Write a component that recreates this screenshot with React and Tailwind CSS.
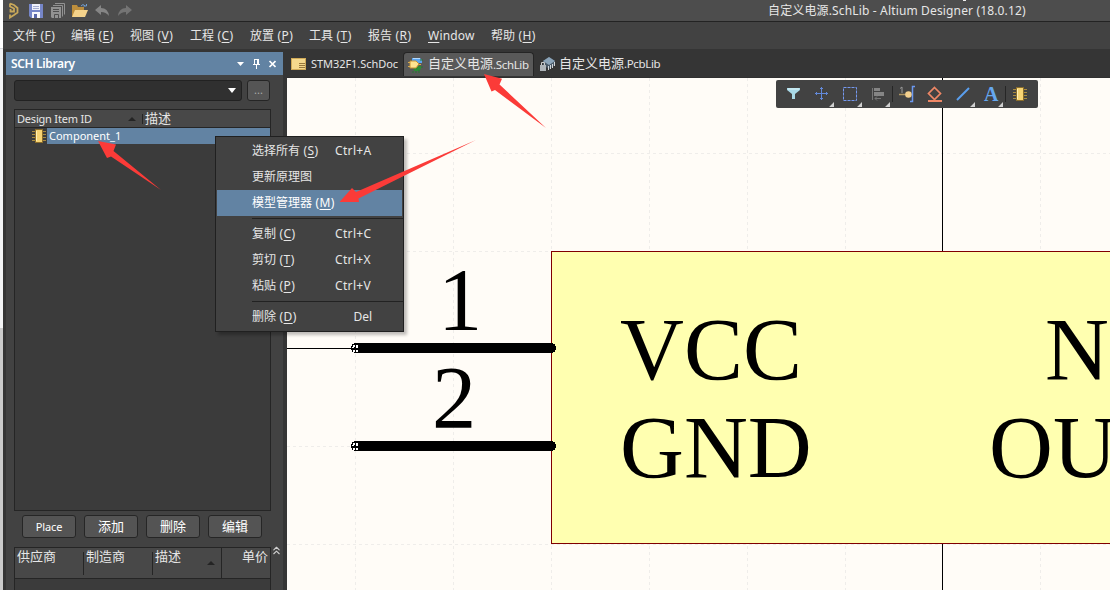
import { ChevronsUp } from 'lucide-react'

const menus = [
  { label: '文件', hot: 'F', w: 'w-[58px]' },
  { label: '编辑', hot: 'E', w: 'w-[59px]' },
  { label: '视图', hot: 'V', w: 'w-[60px]' },
  { label: '工程', hot: 'C', w: 'w-[60px]' },
  { label: '放置', hot: 'P', w: 'w-[59px]' },
  { label: '工具', hot: 'T', w: 'w-[59px]' },
  { label: '报告', hot: 'R', w: 'w-[60px]' },
  { label: 'Window', w: 'w-[63px]' },
  { label: '帮助', hot: 'H', w: 'w-[60px]' },
]

const contextMenu = [
  { label: '选择所有', hot: 'S', keys: 'Ctrl+A' },
  { label: '更新原理图' },
  { label: '模型管理器', hot: 'M', active: true },
  null,
  { label: '复制', hot: 'C', keys: 'Ctrl+C' },
  { label: '剪切', hot: 'T', keys: 'Ctrl+X' },
  { label: '粘贴', hot: 'P', keys: 'Ctrl+V' },
  null,
  { label: '删除', hot: 'D', keys: 'Del' },
]

function Hot({ label, hot }) {
  return (
    <span>
      {label}
      {hot && <span className="tracking-[0.4px]"> (<span className="underline underline-offset-2">{hot}</span>)</span>}
    </span>
  )
}

function Chip({ className }) {
  return (
    <svg className={className} width="16" height="16" viewBox="0 0 16 16">
      <path d="M1 3.500h14M1 6.500h14M1 9.500h14M1 12.500h14" stroke="#a88a3e" />
      <rect x="4.500" y="1.500" width="7" height="13" fill="#f7d473" stroke="#8a6d2c" />
      <path d="M5.500 3v10" stroke="#fff0b8" />
    </svg>
  )
}

function Floppy() {
  return (
    <svg width="14" height="14" viewBox="0 0 14 14">
      <path d="M0 0h14v14H2L0 12z" fill="#7686c8" />
      <rect x="3" y="0" width="8" height="6" fill="#eef0fa" />
      <path d="M4 2.500h6M4 4.500h6" stroke="#a3abce" />
      <rect x="3" y="8" width="8" height="6" fill="#f7f7fb" />
      <rect x="5" y="10" width="3" height="4" fill="#5967a8" />
    </svg>
  )
}

function TitleBar() {
  return (
    <div className="relative flex h-[22px] shrink-0 items-center border-b border-[#232323] bg-[#4d4d4d]">
      <svg className="ml-[5px]" width="12" height="17" viewBox="0 0 12 17">
        <path d="M2 1.500l4 1.500 3.500 3v4.500L6 13l-4 2.500v-3M2 1.500v3l4 2v3H2.500V7" fill="none" stroke="#c8a85a" strokeWidth="1.800" />
      </svg>
      <div className="ml-[9px] flex"><Floppy /></div>
      <svg className="ml-2" width="14" height="15" viewBox="0 0 14 15">
        <path d="M4 .5h9.500v11M2 2.500h9.500v11" fill="none" stroke="#929292" />
        <path d="M0 4h10v11H1l-1-1z" fill="#929292" />
        <path d="M2 6.500h6M2 8.500h6M3.500 15v-3.500h4V15" fill="none" stroke="#4f4f4f" />
      </svg>
      <svg className="ml-[7px]" width="16" height="14" viewBox="0 0 16 14">
        <path d="M0 1h5l1 2h6v10H0z" fill="#bd8e3c" />
        <path d="M9 2q2-3 4 0M11.500 2h3V0" fill="none" stroke="#719dd0" />
        <path d="M3 6h13l-3 7H0z" fill="#f5d38b" />
      </svg>
      <svg className="ml-[7px]" width="15" height="12" viewBox="0 0 15 12">
        <path d="M6 0v3q7 0 8 8-3-4-8-4v3L0 5z" fill="#858585" />
      </svg>
      <svg className="ml-[7px]" width="15" height="12" viewBox="0 0 15 12">
        <path d="M9 0v3q-7 0-8 8 3-4 8-4v3l6-5z" fill="#747474" />
      </svg>
      <div className="ml-auto w-[342px] whitespace-nowrap text-[12px] tracking-[0.15px]">自定义电源.SchLib - Altium Designer (18.0.12)</div>
      <div className="absolute left-[960px] top-0 h-px w-[3px] bg-[#eeeeee]" />
    </div>
  )
}

function MenuBar() {
  return (
    <div className="flex h-[27px] shrink-0 items-center bg-[#424242] pl-[10px] text-[12px]">
      {menus.map(m => (
        <div key={m.label} className={`${m.w} whitespace-nowrap`}>
          {m.hot ? <Hot label={m.label} hot={m.hot} /> : <span className="tracking-[0.2px]"><u className="underline-offset-2">W</u>indow</span>}
        </div>
      ))}
    </div>
  )
}

function Tabs() {
  return (
    <div className="flex h-[29px] shrink-0 items-end border-b border-[#303030] pb-px text-[12px]">
      <div className="flex h-6 w-[117px] items-center whitespace-nowrap pl-1">
        <svg className="mr-[5px] shrink-0" width="15" height="12" viewBox="0 0 15 12">
          <rect x=".5" y=".5" width="14" height="11" fill="#f5d98d" stroke="#d0aa58" />
          <path d="M8 5.500h6M8 7.500h6M8 9.500h6" stroke="#98783c" />
        </svg>
        <span className="text-[11px] tracking-[-0.05px]">STM32F1.SchDoc</span>
      </div>
      <div className="-ml-px flex h-6 w-[131px] items-center whitespace-nowrap rounded-t border border-b-0 border-[#252525] bg-[#595959] pl-1">
        <svg className="mr-[5px] shrink-0" width="15" height="16" viewBox="0 0 15 16">
          <path d="M4 1h8l2 2v3H4z" fill="#5ca5ef" />
          <path d="M5 1.500h7" stroke="#b4daff" />
          <path d="M5 9h8v3l-2 2H6z" fill="#2d8a36" />
          <path d="M5 14v2M8 14v2M11 13v3M13 10h2M12 3h3" stroke="#287733" />
          <path d="M2 4h6l3 3-3 4H2z" fill="#ffe491" stroke="#c99235" />
          <path d="M0 5.500h2M0 9.500h2M11 7.500h2" stroke="#d7ab4c" />
        </svg>
        <span className="-mt-0.5 text-[13px]">自定义电源</span>
        <span className="text-[11.500px] tracking-[-0.35px]">.SchLib</span>
      </div>
      <div className="flex h-6 items-center whitespace-nowrap pl-[6px]">
        <svg className="mr-[4px] shrink-0" width="15" height="14" viewBox="0 0 15 14">
          <path d="M3 4l6-4 6 4v4l-6 4-6-4z" fill="#4a5968" />
          <path d="M3 4l6-4 6 4-6 4z" fill="#8ba4b9" />
          <path d="M8.500 9v4M10.500 8v4M12.500 7v4M14.500 5v4" stroke="#d2d6d9" />
          <rect x="0" y="8" width="6" height="6" fill="#aeb4b9" />
          <path d="M1.500 8V5.500h3V8" fill="none" stroke="#c9c9c9" />
        </svg>
        <span className="text-[13px]">自定义电源</span>
        <span className="text-[11.500px] tracking-[-0.35px]">.PcbLib</span>
      </div>
    </div>
  )
}

function LibraryPanel() {
  return (
    <div className="mt-[3px] flex w-[277px] shrink-0 flex-col bg-[#424242]">
      <div className="flex h-[23px] shrink-0 items-center bg-[#6283a3] pl-[5px] text-[12px] font-semibold text-white">
        <span className="tracking-[-0.35px]">SCH Library</span>
        <svg className="ml-auto mr-[7px]" width="43" height="12" viewBox="0 0 43 12">
          <path d="M4 4h7l-3.500 4z" fill="white" />
          <path d="M21 1.500h5M21.500 1v5M20 6.500h7M23.500 7v4" stroke="white" />
          <path d="M25 1v5" stroke="white" strokeWidth="2" />
          <path d="M36.500 3l6 6M42.500 3l-6 6" stroke="white" strokeWidth="1.700" />
        </svg>
      </div>
      <div className="flex h-[34px] shrink-0 gap-[5px] pl-2 pt-[5px]">
        <div className="flex h-[21px] w-[228px] items-center justify-end rounded-[3px] border border-[#222222] bg-[#303030] pr-[5px]">
          <svg width="8" height="5" viewBox="0 0 8 5"><path d="M0 0h8L4 5z" fill="white" /></svg>
        </div>
        <div className="flex h-[21px] w-[23px] items-center justify-center rounded-[3px] border border-[#252525] bg-[#555555] text-[11px] text-[#aaaaaa]">...</div>
      </div>
      <div className="ml-2 flex h-[402px] w-[257px] shrink-0 flex-col border border-[#252525] bg-[#3b3b3b]">
        <div className="flex h-[18px] shrink-0 items-center border-b border-[#252525] bg-[#484848] pl-0.5 text-[11px]">
          <span className="w-[111px] whitespace-nowrap pt-px tracking-[-0.2px]">Design Item ID</span>
          <svg width="8" height="4" viewBox="0 0 8 4"><path d="M0 4h8L4 0z" fill="#242424" /></svg>
          <div className="ml-[6px] h-2.5 w-px bg-[#252525]" />
          <span className="ml-0.5 text-[13px]">描述</span>
        </div>
        <div className="flex h-4 shrink-0 items-center pl-4">
          <Chip />
          <div className="flex h-4 flex-1 items-center bg-[#6283a3] pl-0.5 text-[11px] text-white">Component_1</div>
        </div>
      </div>
      <div className="flex h-9 shrink-0 gap-2 pl-4 pt-1 text-[13px]">
        {['Place', '添加', '删除', '编辑'].map(b => (
          <button key={b} className="flex h-[23px] w-[54px] items-center justify-center rounded-[3px] border border-[#262626] bg-[#545454] text-white">
            <span className={b === 'Place' ? 'pt-px text-[11px] tracking-[-0.1px]' : ''}>{b}</span>
          </button>
        ))}
      </div>
      <div className="flex min-h-0 flex-1">
        <div className="ml-2 w-[257px] border border-b-0 border-[#252525] bg-[#3b3b3b]">
          <div className="flex h-[31px] border-b border-[#252525] bg-[#484848] text-[13px] leading-[16px]">
            <div className="mb-[3px] mt-1 w-[69px] border-r border-[#252525] pl-0.5"><div className="-mt-1">供应商</div></div>
            <div className="mb-[3px] mt-1 w-[69px] border-r border-[#252525] pl-0.5"><div className="-mt-1">制造商</div></div>
            <div className="flex w-[69px] border-r border-[#252525] pl-0.5">
              描述
              <svg className="ml-auto mr-[6px] mt-[13px]" width="8" height="4" viewBox="0 0 8 4"><path d="M0 4h8L4 0z" fill="#242424" /></svg>
            </div>
            <div className="flex-1 pr-[2px] text-right">单价</div>
          </div>
        </div>
        <ChevronsUp className="-ml-px -mt-[3px] shrink-0 text-[#d0d0d0]" size={13} strokeWidth={2} />
      </div>
    </div>
  )
}

const vLines = [68, 166, 264, 362, 460, 558, 753]
const hLines = [75, 173, 270, 368, 466]

function Pin({ y }) {
  return (
    <g shapeRendering="crispEdges">
      <line x1="69" x2="264" y1={y} y2={y} stroke="black" strokeWidth="10" strokeLinecap="round" />
      <path
        d={`M65 ${y - 1}h2v2h-2zM69 ${y - 1}h2v2h-2zM66 ${y - 3}h2v2h-2zM69 ${y - 3}h2v2h-2zM66 ${y + 2}h2v2h-2zM69 ${y + 2}h2v2h-2z`}
        fill="white"
      />
      <path d={`M65 ${y + 0.5}h7M68.500 ${y - 4}v9`} stroke="black" />
    </g>
  )
}

function Schematic() {
  return (
    <svg className="block" width="823" height="512" viewBox="0 0 823 512">
      <rect width="823" height="512" fill="#fffcf7" />
      <g stroke="#efedea" strokeDasharray="3 3">
        {vLines.map(x => <line key={x} x1={x + 0.5} x2={x + 0.5} y1="0" y2="512" />)}
        {hLines.map(y => <line key={y} x1="0" x2="823" y1={y + 0.5} y2={y + 0.5} />)}
      </g>
      <path d="M0 270.500h68M655.500 0v512" stroke="black" />
      <rect x="264.500" y="173.500" width="600" height="292" fill="#ffffb0" stroke="#800000" />
      <Pin y={270} />
      <Pin y={368} />
      <g fontFamily="Liberation Serif, serif" fontSize="88.500" fill="black">
        <text x="151" y="251">1</text>
        <text x="145" y="349">2</text>
        <text x="333" y="301">VCC</text>
        <text x="333" y="399">GND</text>
        <text x="758" y="301">N</text>
        <text x="702" y="399">OU</text>
      </g>
    </svg>
  )
}

function ActiveBar() {
  return (
    <div className="absolute left-[776px] top-[80px] h-7 w-[262px] rounded-[2px] bg-[#424242]">
      <svg width="262" height="28" viewBox="0 0 262 28">
        <path d="M11 8h13v2l-5 4v5h-3v-5l-5-4z" fill="#a9d9e7" />
        <path d="M12 9h11" stroke="#dff6fa" />
        <path d="M39 13.500h13M45.500 7v13M44 8.500h3M44 18.500h3M40.500 12v3M50.500 12v3" stroke="#6289da" />
        <rect x="67.500" y="7.500" width="13" height="13" fill="none" stroke="#7598ef" strokeDasharray="3 1" />
        <path d="M96.500 8v12" stroke="#777" />
        <path d="M98 8h6v3h-6zM98 12h10v4H98z" fill="#858585" />
        <path d="M99 18.500h6M101 16.500l-2 2 2 2" fill="none" stroke="#777" />
        <path d="M116.500 6v16M229.500 6v16" stroke="#262626" />
        <path d="M124 8.500l2-1.500v6" fill="none" stroke="#999" />
        <path d="M123 14.500h9" stroke="#ae9562" strokeWidth="1.500" />
        <circle cx="132.500" cy="14.500" r="3.300" fill="#f3cf8d" />
        <path d="M139 6.500h-2.500v15H134" fill="none" stroke="#6b98ef" strokeWidth="1.500" />
        <path d="M158.500 7.500l6 6-6 6-6-6z" fill="none" stroke="#ef8766" strokeWidth="1.700" />
        <path d="M152 21h14" stroke="#ef8766" strokeWidth="2" />
        <path d="M181 20l12-12" stroke="#5a9fee" strokeWidth="2" />
        <text x="208" y="21" fill="#65a7ef" fontFamily="Liberation Serif, serif" fontSize="20" fontWeight="bold">A</text>
        <path d="M58 22v5h-5zM86 22v5h-5zM114 22v5h-5zM199 22v5h-5zM227 22v5h-5z" fill="#d0d0d0" />
      </svg>
      <Chip className="absolute left-[236px] top-[6px]" />
    </div>
  )
}

function ContextMenu() {
  return (
    <div className="absolute left-[215px] top-[136px] h-[196px] w-[189px] border border-[#202020] bg-[#424242] p-px text-[12px] shadow-[3px_3px_3px_rgba(0,0,0,0.25)]">
      {contextMenu.map((item, i) => item ? (
        <div key={item.label} className={`flex h-[26px] items-center justify-between whitespace-nowrap pl-[35px] pr-[30px] ${item.active ? 'bg-[#6283a3] text-white' : ''}`}>
          <Hot label={item.label} hot={item.hot} />
          <span className={item.keys === 'Del' ? '' : 'w-[37px] tracking-[0.35px]'}>{item.keys}</span>
        </div>
      ) : (
        <div key={i} className="-mr-px ml-[35px] h-[5px] pt-0.5"><div className="h-px bg-[#222222]" /></div>
      ))}
    </div>
  )
}

function Arrows() {
  return (
    <svg className="pointer-events-none absolute left-0 top-0" width="1110" height="590" viewBox="0 0 1110 590" fill="#fb3b38">
      <path d="M98 141l18 3.500-2.500 6.500 47.500 39-50-33.500-4 1.500z" />
      <path d="M484 74l18 4.700-2.500 5.800 46.500 43.500-51-38-3.500 1.500z" />
      <path d="M339.500 202l12.500-14 4 4 120-52-117.500 58.500.5 3.500z" />
    </svg>
  )
}

export default function App() {
  return (
    <div className="relative flex h-[590px] w-[1110px] overflow-hidden bg-[#353535] font-['Noto_Sans','Noto_Sans_CJK_SC',sans-serif] text-[#e6e6e6]">
      <div className="flex w-[3px] shrink-0 flex-col">
        <div className="h-[49px] border-b border-[#d5d8dc] bg-white" />
        <div className="h-[279px] bg-[#f3f4f5]" />
        <div className="flex-1 bg-[#cbcbcb]" />
      </div>
      <div className="flex min-w-0 flex-1 flex-col">
        <TitleBar />
        <MenuBar />
        <div className="flex min-h-0 flex-1 pl-[3px]">
          <LibraryPanel />
          <div className="ml-1 min-w-0 flex-1">
            <Tabs />
            <Schematic />
          </div>
        </div>
      </div>
      <ActiveBar />
      <ContextMenu />
      <Arrows />
    </div>
  )
}
